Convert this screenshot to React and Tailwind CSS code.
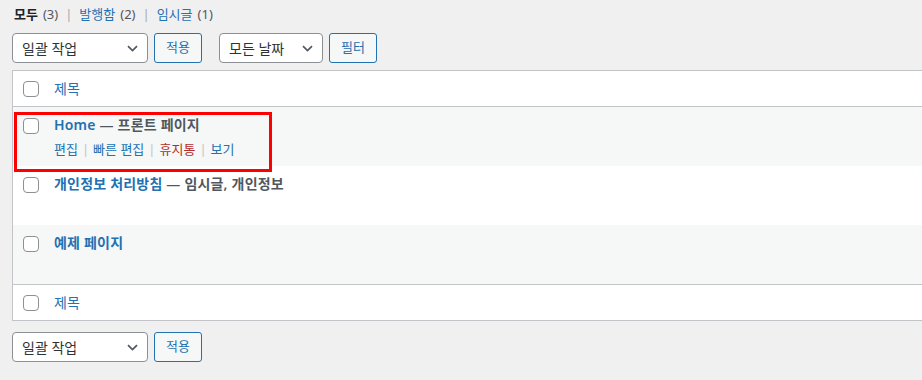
const font = { fontFamily: "'Noto Sans', 'Noto Sans CJK KR', sans-serif" };

function Chevron() {
  return (
    <svg width="11" height="7" viewBox="0 0 11 7" fill="none">
      <path d="M1 1.2l4.5 4.3 4.5-4.3" stroke="#50575e" strokeWidth="1.7" />
    </svg>
  );
}

function Select({ label, className }) {
  return (
    <div
      className={`h-[30px] flex items-center justify-between pl-[9px] pr-[9px] bg-white border border-[#8c8f94] rounded-[4px] text-[14px] text-[#2c3338] ${className}`}
    >
      <span>{label}</span>
      <Chevron />
    </div>
  );
}

function Button({ label }) {
  return (
    <div className="h-[30px] w-[48px] flex items-center justify-center bg-[#f6f7f7] border border-[#2271b1] rounded-[3px] text-[13px] text-[#2271b1]">
      {label}
    </div>
  );
}

function Checkbox() {
  return <div className="w-4 h-4 bg-white border border-[#8c8f94] rounded-[4px] shrink-0" />;
}

function HeadRow({ border }) {
  return (
    <div className={`h-[36px] flex items-center bg-white ${border}`}>
      <div className="w-[41px] pl-[10px] flex">
        <Checkbox />
      </div>
      <span className="text-[14px] text-[#2271b1]">제목</span>
    </div>
  );
}

function Row({ title, state, striped, actions }) {
  return (
    <div className={`h-[59px] flex ${striped ? "bg-[#f6f7f7]" : "bg-white"}`}>
      <div className="w-[41px] pl-[10px] pt-[11px]">
        <Checkbox />
      </div>
      <div className="pt-[8px]">
        <div className="text-[14px] leading-[20px] font-semibold tracking-[0.2px]">
          <span className="text-[#2271b1]">{title}</span>
          {state && <span className="text-[#50575e]"> — {state}</span>}
        </div>
        {actions && (
          <div className="pt-[4px] text-[13px] leading-[20px] text-[#2271b1]">
            <span>편집</span>
            <span className="text-[#c3c4c7] mx-[4px]">|</span>
            <span>빠른 편집</span>
            <span className="text-[#c3c4c7] mx-[4px]">|</span>
            <span className="text-[#b32d2e]">휴지통</span>
            <span className="text-[#c3c4c7] mx-[4px]">|</span>
            <span>보기</span>
          </div>
        )}
      </div>
    </div>
  );
}

export default function App() {
  return (
    <div className="w-full h-[380px] bg-[#f0f0f1] pl-3 overflow-hidden" style={font}>
      <div className="h-[30px] flex items-center pl-[2px] text-[13px] text-[#50575e]">
        <span className="font-semibold text-[#1d2327]">모두</span>
        <span className="ml-[5px]">(3)</span>
        <span className="mx-[7px] text-[#a7aaad]">|</span>
        <span className="text-[#2271b1]">발행함</span>
        <span className="ml-[5px]">(2)</span>
        <span className="mx-[7px] text-[#a7aaad]">|</span>
        <span className="text-[#2271b1]">임시글</span>
        <span className="ml-[5px]">(1)</span>
      </div>

      <div className="mt-[3px] flex items-center">
        <Select label="일괄 작업" className="w-[136px]" />
        <div className="ml-[6px]">
          <Button label="적용" />
        </div>
        <Select label="모든 날짜" className="w-[104px] ml-[17px]" />
        <div className="ml-[6px]">
          <Button label="필터" />
        </div>
      </div>

      <div className="relative mt-[7px] border-l border-y border-[#c3c4c7]">
        <HeadRow border="border-b border-[#c3c4c7]" />
        <Row title="Home" state="프론트 페이지" striped actions />
        <Row title="개인정보 처리방침" state="임시글, 개인정보" />
        <Row title="예제 페이지" striped />
        <HeadRow border="border-t border-[#c3c4c7]" />
        <div className="absolute left-[1px] top-[41px] w-[258px] h-[60px] border-[3px] border-[#ff0000] pointer-events-none" />
      </div>

      <div className="mt-[11px] flex items-center">
        <Select label="일괄 작업" className="w-[136px]" />
        <div className="ml-[6px]">
          <Button label="적용" />
        </div>
      </div>
    </div>
  );
}
